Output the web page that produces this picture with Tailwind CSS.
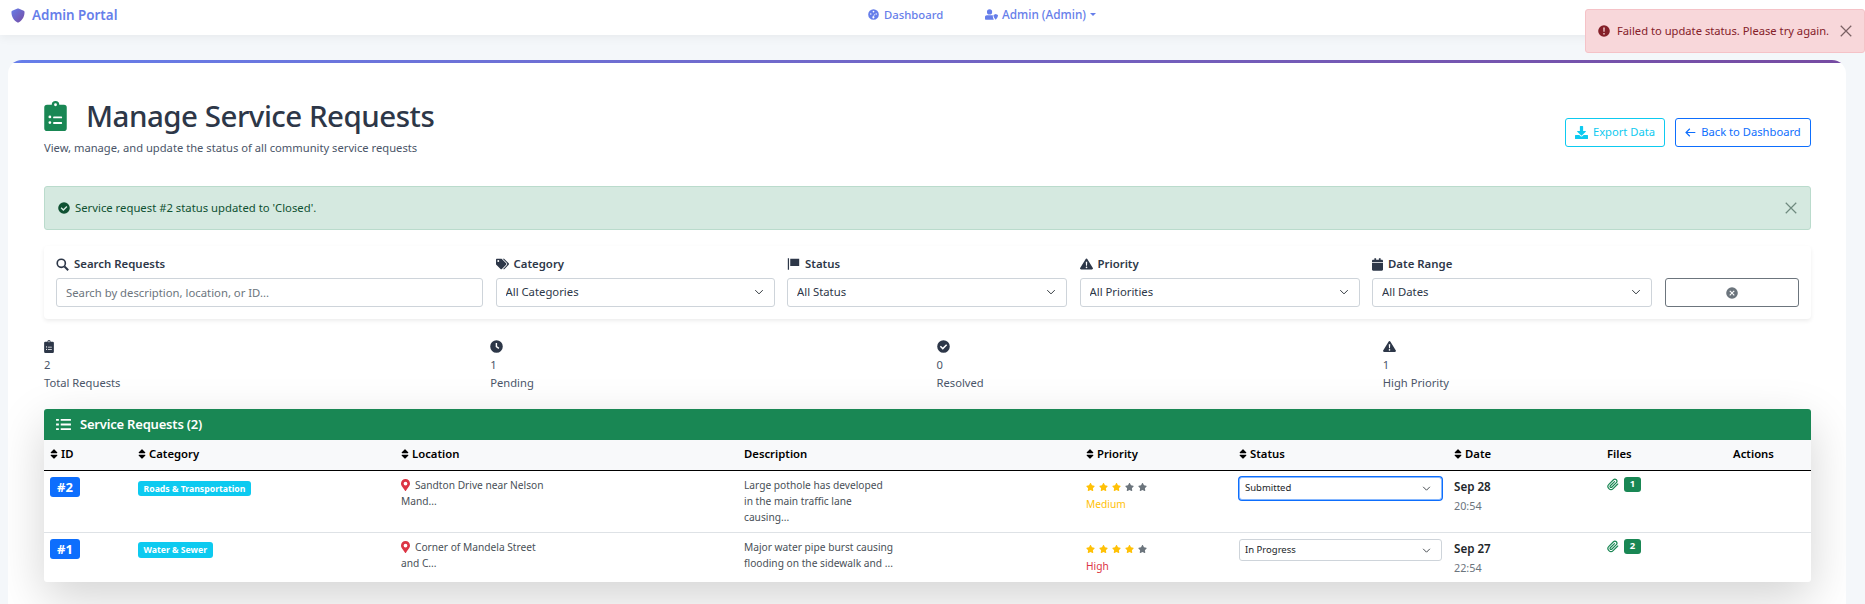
<!DOCTYPE html>
<html lang="en">
<head>
    <meta charset="UTF-8">
    <meta name="viewport" content="width=device-width, initial-scale=1.0">
    <title>Manage Service Requests</title>
    <script src="https://cdn.jsdelivr.net/npm/@tailwindcss/browser@4"></script>
</head>
<body class="bg-[#f4f7fa] h-[604px] overflow-hidden relative font-['Noto_Sans',sans-serif] text-[#212529]">

    <!-- icon set -->
    <svg class="hidden">
        <defs>
            <symbol id="i-clipboard" viewBox="0 0 384 512"><path fill-rule="evenodd" d="M336 64h-80a64 64 0 0 0-128 0H48A48 48 0 0 0 0 112v352a48 48 0 0 0 48 48h288a48 48 0 0 0 48-48V112a48 48 0 0 0-48-48zM192 40a24 24 0 1 1 0 48 24 24 0 0 1 0-48zM96 248a24 24 0 1 1 0 48 24 24 0 0 1 0-48zm0 96a24 24 0 1 1 0 48 24 24 0 0 1 0-48zm64-80h136a8 8 0 0 1 8 8v16a8 8 0 0 1-8 8H160a8 8 0 0 1-8-8v-16a8 8 0 0 1 8-8zm0 96h136a8 8 0 0 1 8 8v16a8 8 0 0 1-8 8H160a8 8 0 0 1-8-8v-16a8 8 0 0 1 8-8z"/></symbol>
            <symbol id="i-check" viewBox="0 0 512 512"><path fill-rule="evenodd" d="M256 8a248 248 0 1 0 0 496 248 248 0 0 0 0-496zm-28 372L112 264l40-40 76 76 132-132 40 40z"/></symbol>
            <symbol id="i-clock" viewBox="0 0 512 512"><path fill-rule="evenodd" d="M256 8a248 248 0 1 0 0 496 248 248 0 0 0 0-496zm-32 112h56v124l86 62-32 46-110-80z"/></symbol>
            <symbol id="i-warn" viewBox="0 0 576 512"><path fill-rule="evenodd" d="M288 16c-18 0-34 9-42 25L7 438c-18 32 5 58 42 58h478c37 0 60-26 42-58L330 41c-8-16-24-25-42-25zm-32 144h64l-10 176h-44zm32 212a36 36 0 1 1 0 72 36 36 0 0 1 0-72z"/></symbol>
            <symbol id="i-sort" viewBox="0 0 320 512"><path d="M41 288h238c21 0 32 26 17 41L177 448c-9 9-25 9-34 0L24 329c-15-15-4-41 17-41zM296 183L177 64c-9-9-25-9-34 0L24 183c-15 15-4 41 17 41h238c21 0 32-26 17-41z"/></symbol>
            <symbol id="i-pin" viewBox="0 0 384 512"><path fill-rule="evenodd" d="M172 502C27 291 0 267 0 192 0 86 86 0 192 0s192 86 192 192c0 75-27 99-172 310-10 14-30 14-40 0zM192 272a80 80 0 1 0 0-160 80 80 0 0 0 0 160z"/></symbol>
            <symbol id="i-star" viewBox="0 0 576 512"><path d="M259 18l-65 132-146 21c-26 4-37 36-18 55l106 103-25 146c-5 26 23 46 46 34l131-69 131 69c23 12 51-8 46-34l-25-146 106-103c19-19 8-51-18-55l-146-21-65-132c-12-24-46-24-58 0z"/></symbol>
            <symbol id="i-clip" viewBox="0 0 24 24"><path d="M21.44 11.05l-9.19 9.19a6 6 0 0 1-8.49-8.49l9.19-9.19a4 4 0 0 1 5.66 5.66l-9.2 9.19a2 2 0 0 1-2.83-2.83l8.49-8.48" fill="none" stroke="currentColor" stroke-width="2.4" stroke-linecap="round"/></symbol>
            <symbol id="i-x" viewBox="0 0 16 16"><path d="M2 2l12 12M14 2L2 14" fill="none" stroke="currentColor" stroke-width="1.4"/></symbol>
            <symbol id="i-chev" viewBox="0 0 16 16"><path d="M2 5l6 6 6-6" fill="none" stroke="currentColor" stroke-width="1.6"/></symbol>
        </defs>
    </svg>

    <!-- Navbar -->
    <nav class="h-[35px] bg-white shadow-[0_2px_10px_rgba(0,0,0,0.06)] relative text-[#667eea]">
        <div class="absolute left-[11px] top-[8px] flex items-center gap-[7px]">
            <svg class="w-[14px] h-[15px]" viewBox="0 0 512 512"><defs><linearGradient id="g-brand" x1="0" y1="0" x2="1" y2="1"><stop offset="0" stop-color="#667eea"/><stop offset="1" stop-color="#764ba2"/></linearGradient></defs><path fill="url(#g-brand)" d="M466 84L274 4a48 48 0 0 0-37 0L45 84c-18 7-29 24-29 44 0 198 114 335 221 380a48 48 0 0 0 37 0c86-36 221-159 221-380 0-20-11-37-29-44z"/></svg>
            <span class="text-[13.4px] font-semibold leading-none">Admin Portal</span>
        </div>
        <div class="absolute left-[868px] top-[7px] flex items-center gap-[5px] text-[11.3px] font-medium leading-[15px]">
            <svg class="w-[11px] h-[11px] fill-[#667eea]" viewBox="0 0 512 512"><path fill-rule="evenodd" d="M256 8a248 248 0 1 0 0 496 248 248 0 0 0 0-496zm0 70a40 40 0 1 1 0 80 40 40 0 0 1 0-80zM130 200a34 34 0 1 1 0 68 34 34 0 0 1 0-68zm252 0a34 34 0 1 1 0 68 34 34 0 0 1 0-68zm-94 30l26 14-34 104a48 48 0 1 1-26-10z"/></svg>
            <span>Dashboard</span>
        </div>
        <div class="absolute left-[985px] top-[7px] flex items-center gap-[4px] text-[11.8px] font-medium leading-[15px]">
            <svg class="w-[13px] h-[11px] fill-[#667eea]" viewBox="0 0 640 512"><path d="M224 256a128 128 0 1 0 0-256 128 128 0 0 0 0 256zM90 288C40 288 0 328 0 378v86c0 27 21 48 48 48h352c13 0 24-5 33-13-26-40-49-103-49-180v-20c-14-6-30-11-48-11zM640 280c0 90-60 190-112 232-52-42-112-142-112-232l112-48z"/></svg>
            <span>Admin (Admin)</span>
            <span class="w-0 h-0 border-x-[3px] border-x-transparent border-t-[3px] border-t-[#667eea]"></span>
        </div>
    </nav>

    <!-- Toast -->
    <div class="absolute left-[1585px] top-[9px] w-[280px] h-[44px] bg-[#f8d7da] border border-[#f5c2c7] rounded-[3px] flex items-center text-[#842029] text-[11.2px] pl-[12px] z-10">
        <svg class="w-[12px] h-[12px] fill-[#842029] mr-[7px]" viewBox="0 0 512 512"><path fill-rule="evenodd" d="M256 8a248 248 0 1 0 0 496 248 248 0 0 0 0-496zm-32 100h64l-8 180h-48zm32 230a36 36 0 1 1 0 72 36 36 0 0 1 0-72z"/></svg>
        <span>Failed to update status. Please try again.</span>
        <svg class="w-[14px] h-[14px] text-[#7a6064] absolute left-[253px] top-[14px]"><use href="#i-x"/></svg>
    </div>

    <main class="pt-[25px] pl-[8px]">
        <div class="w-[1838px] h-[600px] bg-white rounded-[14px] overflow-hidden">
            <div class="h-[3px] bg-linear-to-r from-[#667eea] to-[#764ba2]"></div>

            <div class="pl-[36px] pr-[35px]">
                <!-- Header -->
                <div class="h-[123px] flex items-start justify-between">
                    <div class="pt-[37px]">
                        <div class="flex items-center gap-[19px] h-[32px]">
                            <svg class="w-[23px] h-[30px] fill-[#198754]"><use href="#i-clipboard"/></svg>
                            <h1 class="text-[29.5px] tracking-[-0.5px] font-medium leading-none text-[#2d3748]">Manage Service Requests</h1>
                        </div>
                        <p class="text-[11.2px] text-[#4a5568] mt-[8px] leading-[16px]">View, manage, and update the status of all community service requests</p>
                    </div>
                    <div class="flex gap-[10px] pt-[55px]">
                        <button class="w-[100px] h-[29px] border border-[#0dcaf0] rounded-[3px] text-[#0dcaf0] text-[11.2px] flex items-center justify-center gap-[5px]">
                            <svg class="w-[13px] h-[13px] fill-[#0dcaf0]" viewBox="0 0 512 512"><path d="M216 0h80c13 0 24 11 24 24v168h88c18 0 27 21 15 34L271 378c-8 8-22 8-30 0L89 226c-12-13-3-34 15-34h88V24c0-13 11-24 24-24zM512 376v112c0 13-11 24-24 24H24c-13 0-24-11-24-24V376c0-13 11-24 24-24h147l49 49c20 20 52 20 72 0l49-49h147c13 0 24 11 24 24z"/></svg>
                            Export Data
                        </button>
                        <button class="w-[136px] h-[29px] border border-[#0d6efd] rounded-[3px] text-[#0d6efd] text-[11.2px] flex items-center justify-center gap-[5px]">
                            <svg class="w-[11px] h-[11px]" viewBox="0 0 16 16"><path d="M15 8H2M7 2.5L1.5 8 7 13.5" fill="none" stroke="#0d6efd" stroke-width="1.7"/></svg>
                            Back to Dashboard
                        </button>
                    </div>
                </div>

                <!-- Success alert -->
                <div class="h-[44px] bg-[#d5e9e0] border border-[#badbcc] rounded-[3px] flex items-center justify-between pl-[13px] pr-[12px] text-[#0f5132] text-[11.3px]">
                    <div class="flex items-center gap-[5px]">
                        <svg class="w-[12px] h-[12px] fill-[#0f5132]"><use href="#i-check"/></svg>
                        <span>Service request #2 status updated to 'Closed'.</span>
                    </div>
                    <svg class="w-[14px] h-[14px] text-[#6f8a7f]"><use href="#i-x"/></svg>
                </div>

                <!-- Filters -->
                <div class="mt-[16px] h-[73px] rounded-[4px] shadow-[0_2px_4px_rgba(0,0,0,0.075)] px-[12px] pt-[9px] grid grid-cols-[427px_279px_280px_280px_280px_134px] gap-x-[12.5px] text-[#2d3748]">
                    <div>
                        <label class="flex items-center gap-[5px] h-[18px] mb-[5px] text-[11.4px] font-semibold">
                            <svg class="w-[13px] h-[13px]" viewBox="0 0 16 16"><circle cx="6.5" cy="6.5" r="5" fill="none" stroke="#2d3748" stroke-width="2"/><path d="M10.5 10.5L15 15" stroke="#2d3748" stroke-width="2.4"/></svg>
                            Search Requests
                        </label>
                        <input type="text" placeholder="Search by description, location, or ID..." class="w-full h-[29px] border border-[#ced4da] rounded-[3px] px-[9px] text-[11.3px] placeholder:text-[#6c757d]">
                    </div>
                    <div>
                        <label class="flex items-center gap-[5px] h-[18px] mb-[5px] text-[11.4px] font-semibold">
                            <svg class="w-[13px] h-[12px] fill-[#2d3748]" viewBox="0 0 640 512"><path fill-rule="evenodd" d="M497 225L287 15c-9-9-21-15-34-15H48C21 0 0 21 0 48v205c0 13 5 25 14 34l210 210c19 19 49 19 68 0l205-205c19-19 19-49 0-67zM112 160a48 48 0 1 1 0-96 48 48 0 0 1 0 96zM625 293L420 498c-19 19-49 19-68 0l-1-1 175-175c16-16 25-38 25-61s-9-45-25-61L329 3V0h49c13 0 25 5 34 14l213 211c19 19 19 49 0 68z"/></svg>
                            Category
                        </label>
                        <div class="relative">
                            <select class="appearance-none w-full h-[29px] border border-[#ced4da] rounded-[3px] px-[9px] text-[11.3px] bg-white"><option>All Categories</option></select>
                            <svg class="absolute right-[11px] top-[9px] w-[10px] h-[10px] text-[#343a40] pointer-events-none"><use href="#i-chev"/></svg>
                        </div>
                    </div>
                    <div>
                        <label class="flex items-center gap-[5px] h-[18px] mb-[5px] text-[11.4px] font-semibold">
                            <svg class="w-[13px] h-[14px] fill-[#2d3748]" viewBox="0 0 16 16"><path d="M1 1h1.5v14H1zM4 1.5h11v9H4z"/></svg>
                            Status
                        </label>
                        <div class="relative">
                            <select class="appearance-none w-full h-[29px] border border-[#ced4da] rounded-[3px] px-[9px] text-[11.3px] bg-white"><option>All Status</option></select>
                            <svg class="absolute right-[11px] top-[9px] w-[10px] h-[10px] text-[#343a40] pointer-events-none"><use href="#i-chev"/></svg>
                        </div>
                    </div>
                    <div>
                        <label class="flex items-center gap-[5px] h-[18px] mb-[5px] text-[11.4px] font-semibold">
                            <svg class="w-[13px] h-[12px] fill-[#2d3748]"><use href="#i-warn"/></svg>
                            Priority
                        </label>
                        <div class="relative">
                            <select class="appearance-none w-full h-[29px] border border-[#ced4da] rounded-[3px] px-[9px] text-[11.3px] bg-white"><option>All Priorities</option></select>
                            <svg class="absolute right-[11px] top-[9px] w-[10px] h-[10px] text-[#343a40] pointer-events-none"><use href="#i-chev"/></svg>
                        </div>
                    </div>
                    <div>
                        <label class="flex items-center gap-[5px] h-[18px] mb-[5px] text-[11.4px] font-semibold">
                            <svg class="w-[11px] h-[13px] fill-[#2d3748]" viewBox="0 0 448 512"><path d="M12 192h424c7 0 12 5 12 12v260c0 27-21 48-48 48H48c-27 0-48-21-48-48V204c0-7 5-12 12-12zM448 148v12H0v-48c0-27 21-48 48-48h48V16c0-9 7-16 16-16h40c9 0 16 7 16 16v48h112V16c0-9 7-16 16-16h40c9 0 16 7 16 16v48h48c27 0 48 21 48 48z"/></svg>
                            Date Range
                        </label>
                        <div class="relative">
                            <select class="appearance-none w-full h-[29px] border border-[#ced4da] rounded-[3px] px-[9px] text-[11.3px] bg-white"><option>All Dates</option></select>
                            <svg class="absolute right-[11px] top-[9px] w-[10px] h-[10px] text-[#343a40] pointer-events-none"><use href="#i-chev"/></svg>
                        </div>
                    </div>
                    <div class="pt-[23px]">
                        <button class="w-full h-[29px] border border-[#6c757d] rounded-[3px] flex items-center justify-center">
                            <svg class="w-[12px] h-[12px] fill-[#6c757d]" viewBox="0 0 512 512"><path fill-rule="evenodd" d="M256 8a248 248 0 1 0 0 496 248 248 0 0 0 0-496zm-80 136l80 80 80-80 32 32-80 80 80 80-32 32-80-80-80 80-32-32 80-80-80-80z"/></svg>
                        </button>
                    </div>
                </div>

                <!-- Stats -->
                <div class="mt-[21px] h-[69px] grid grid-cols-4 gap-x-[18px] text-[11.2px] text-[#4a5568]">
                    <div>
                        <svg class="w-[10px] h-[13px] fill-[#2d3748] mb-[3px]"><use href="#i-clipboard"/></svg>
                        <div class="leading-[18px]">2</div>
                        <div class="leading-[18px]">Total Requests</div>
                    </div>
                    <div>
                        <svg class="w-[13px] h-[13px] fill-[#2d3748] mb-[3px]"><use href="#i-clock"/></svg>
                        <div class="leading-[18px]">1</div>
                        <div class="leading-[18px]">Pending</div>
                    </div>
                    <div>
                        <svg class="w-[13px] h-[13px] fill-[#2d3748] mb-[3px]"><use href="#i-check"/></svg>
                        <div class="leading-[18px]">0</div>
                        <div class="leading-[18px]">Resolved</div>
                    </div>
                    <div>
                        <svg class="w-[13px] h-[13px] fill-[#2d3748] mb-[3px]"><use href="#i-warn"/></svg>
                        <div class="leading-[18px]">1</div>
                        <div class="leading-[18px]">High Priority</div>
                    </div>
                </div>

                <!-- Table card -->
                <div class="w-[1767px] h-[173px] bg-white rounded-[3px] shadow-[0_16px_48px_rgba(0,0,0,0.175)] overflow-hidden">
                    <div class="h-[31px] bg-[#198754] text-white flex items-center gap-[9px] pl-[12px] text-[13px] tracking-[-0.2px] font-semibold">
                        <svg class="w-[15px] h-[13px]" viewBox="0 0 16 14"><path d="M5 2h11M5 7h11M5 12h11" stroke="#fff" stroke-width="2"/><path d="M0 1h3v2H0zM0 6h3v2H0zM0 11h3v2H0z" fill="#fff"/></svg>
                        Service Requests (2)
                    </div>
                    <table class="w-[1767px] table-fixed border-collapse">
                        <colgroup>
                            <col class="w-[88px]"><col class="w-[263px]"><col class="w-[343px]"><col class="w-[342px]"><col class="w-[153px]"><col class="w-[215px]"><col class="w-[153px]"><col class="w-[95px]"><col class="w-[115px]">
                        </colgroup>
                        <thead>
                            <tr class="h-[30px] bg-[#f8f9fa] border-b border-black text-black text-left text-[11.3px]">
                                <th class="px-[6px] font-semibold"><svg class="inline w-[8px] h-[12px] mr-[3px] align-[-2px]"><use href="#i-sort"/></svg>ID</th>
                                <th class="px-[6px] font-semibold"><svg class="inline w-[8px] h-[12px] mr-[3px] align-[-2px]"><use href="#i-sort"/></svg>Category</th>
                                <th class="px-[6px] font-semibold"><svg class="inline w-[8px] h-[12px] mr-[3px] align-[-2px]"><use href="#i-sort"/></svg>Location</th>
                                <th class="px-[6px] font-semibold">Description</th>
                                <th class="px-[6px] font-semibold"><svg class="inline w-[8px] h-[12px] mr-[3px] align-[-2px]"><use href="#i-sort"/></svg>Priority</th>
                                <th class="px-[6px] font-semibold"><svg class="inline w-[8px] h-[12px] mr-[3px] align-[-2px]"><use href="#i-sort"/></svg>Status</th>
                                <th class="px-[6px] font-semibold"><svg class="inline w-[8px] h-[12px] mr-[3px] align-[-2px]"><use href="#i-sort"/></svg>Date</th>
                                <th class="px-[6px] font-semibold">Files</th>
                                <th class="px-[6px] font-semibold text-center">Actions</th>
                            </tr>
                        </thead>
                        <tbody class="text-[10.2px] text-[#495057] leading-[16px]">
                            <tr class="h-[62px] border-b border-[#dee2e6] align-top">
                                <td class="px-[6px] pt-[6px]"><span class="inline-flex items-center justify-center w-[30px] h-[20px] bg-[#0d6efd] text-white text-[13px] font-bold rounded-[3px]">#2</span></td>
                                <td class="px-[6px] pt-[9px]"><span class="inline-flex items-center px-[5.5px] h-[15px] bg-[#0dcaf0] text-white text-[8.7px] font-bold rounded-[3px]">Roads &amp; Transportation</span></td>
                                <td class="px-[6px] pt-[6px]"><svg class="inline w-[9px] h-[12px] fill-[#dc3545] mr-[5px] align-[-2px]"><use href="#i-pin"/></svg>Sandton Drive near Nelson<br>Mand...</td>
                                <td class="px-[6px] pt-[6px]">Large pothole has developed<br>in the main traffic lane<br>causing...</td>
                                <td class="px-[6px] pt-[11px]">
                                    <div class="flex gap-[4px] h-[10px] items-center">
                                        <svg class="w-[9px] h-[8px] fill-[#ffc107]"><use href="#i-star"/></svg><svg class="w-[9px] h-[8px] fill-[#ffc107]"><use href="#i-star"/></svg><svg class="w-[9px] h-[8px] fill-[#ffc107]"><use href="#i-star"/></svg><svg class="w-[9px] h-[8px] fill-[#6c757d]"><use href="#i-star"/></svg><svg class="w-[9px] h-[8px] fill-[#6c757d]"><use href="#i-star"/></svg>
                                    </div>
                                    <div class="text-[#ffc107] mt-[4px]">Medium</div>
                                </td>
                                <td class="px-[6px] pt-[6px]">
                                    <div class="relative w-[203px]">
                                        <select class="appearance-none w-full h-[23px] border border-[#86b7fe] rounded-[3px] px-[5px] text-[9.5px] text-[#212529] bg-white shadow-[0_0_0_1px_#0d6efd]"><option>Submitted</option></select>
                                        <svg class="absolute right-[11px] top-[7px] w-[9px] h-[9px] text-[#343a40] pointer-events-none"><use href="#i-chev"/></svg>
                                    </div>
                                </td>
                                <td class="px-[6px] pt-[8px]">
                                    <div class="text-[11.6px] font-semibold text-[#212529]">Sep 28</div>
                                    <div class="text-[#6c757d] text-[10.8px] mt-[3px]">20:54</div>
                                </td>
                                <td class="px-[6px] pt-[6px]">
                                    <div class="flex items-center gap-[5px]">
                                        <svg class="w-[12px] h-[13px] text-[#198754]"><use href="#i-clip"/></svg>
                                        <span class="inline-flex items-center justify-center w-[17px] h-[15px] bg-[#198754] text-white text-[9.5px] font-bold rounded-[3px]">1</span>
                                    </div>
                                </td>
                            </tr>
                            <tr class="h-[49px] align-top">
                                <td class="px-[6px] pt-[6px]"><span class="inline-flex items-center justify-center w-[30px] h-[20px] bg-[#0d6efd] text-white text-[13px] font-bold rounded-[3px]">#1</span></td>
                                <td class="px-[6px] pt-[8px]"><span class="inline-flex items-center px-[5.5px] h-[16px] bg-[#0dcaf0] text-white text-[8.7px] font-bold rounded-[3px]">Water &amp; Sewer</span></td>
                                <td class="px-[6px] pt-[6px]"><svg class="inline w-[9px] h-[12px] fill-[#dc3545] mr-[5px] align-[-2px]"><use href="#i-pin"/></svg>Corner of Mandela Street<br>and C...</td>
                                <td class="px-[6px] pt-[6px]">Major water pipe burst causing<br>flooding on the sidewalk and ...</td>
                                <td class="px-[6px] pt-[11px]">
                                    <div class="flex gap-[4px] h-[10px] items-center">
                                        <svg class="w-[9px] h-[8px] fill-[#ffc107]"><use href="#i-star"/></svg><svg class="w-[9px] h-[8px] fill-[#ffc107]"><use href="#i-star"/></svg><svg class="w-[9px] h-[8px] fill-[#ffc107]"><use href="#i-star"/></svg><svg class="w-[9px] h-[8px] fill-[#ffc107]"><use href="#i-star"/></svg><svg class="w-[9px] h-[8px] fill-[#6c757d]"><use href="#i-star"/></svg>
                                    </div>
                                    <div class="text-[#dc3545] mt-[4px]">High</div>
                                </td>
                                <td class="px-[6px] pt-[6px]">
                                    <div class="relative w-[203px]">
                                        <select class="appearance-none w-full h-[22px] border border-[#ced4da] rounded-[3px] px-[5px] text-[9.5px] text-[#212529] bg-white"><option>In Progress</option></select>
                                        <svg class="absolute right-[11px] top-[7px] w-[9px] h-[9px] text-[#343a40] pointer-events-none"><use href="#i-chev"/></svg>
                                    </div>
                                </td>
                                <td class="px-[6px] pt-[8px]">
                                    <div class="text-[11.6px] font-semibold text-[#212529]">Sep 27</div>
                                    <div class="text-[#6c757d] text-[10.8px] mt-[3px]">22:54</div>
                                </td>
                                <td class="px-[6px] pt-[6px]">
                                    <div class="flex items-center gap-[5px]">
                                        <svg class="w-[12px] h-[13px] text-[#198754]"><use href="#i-clip"/></svg>
                                        <span class="inline-flex items-center justify-center w-[17px] h-[15px] bg-[#198754] text-white text-[9.5px] font-bold rounded-[3px]">2</span>
                                    </div>
                                </td>
                            </tr>
                        </tbody>
                    </table>
                </div>
            </div>
        </div>
    </main>

</body>
</html>
